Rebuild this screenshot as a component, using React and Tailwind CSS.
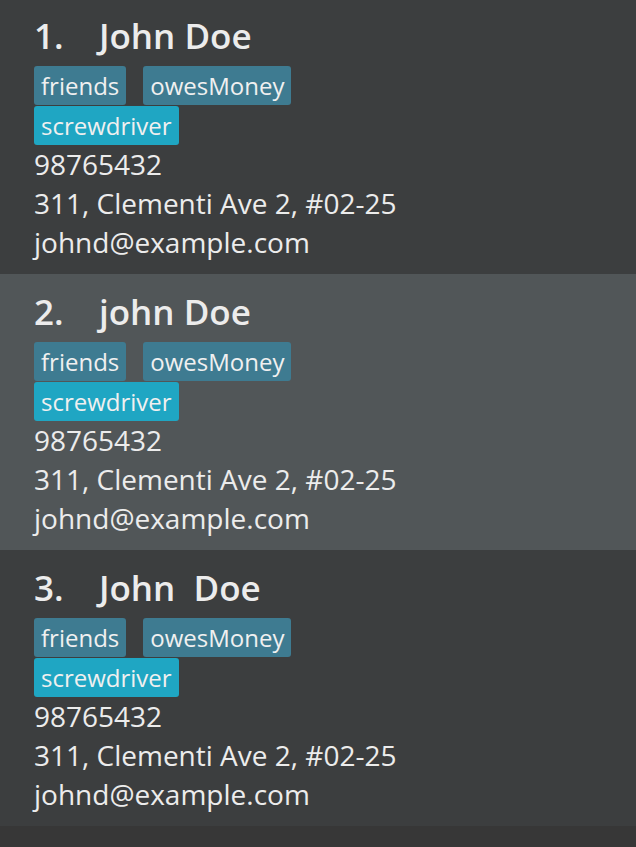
import React from "react";

const people = [
  { id: 1, name: "John Doe", selected: false },
  { id: 2, name: "john Doe", selected: true },
  { id: 3, name: "John  Doe", selected: false },
];

const Tag = ({ label, bright }) => (
  <span
    className={`inline-block rounded-[3px] px-[7px] h-[39px] leading-[39px] text-[24px] text-[#f0f0f0] ${
      bright ? "bg-[#1fa6c3]" : "bg-[#3e7b91]"
    }`}
  >
    {label}
  </span>
);

const PersonCard = ({ index, name, selected }) => (
  <div
    className={`h-[276px] pl-[34px] pt-[12px] ${
      selected ? "bg-[#515658]" : "bg-[#3c3e3f]"
    }`}
  >
    <div className="flex items-baseline text-[35px] font-semibold leading-[50px] text-[#ececec] translate-y-[1px]">
      <span className="w-[65px]">{index}.</span>
      <span className="whitespace-pre">{name}</span>
    </div>
    <div className="flex flex-wrap w-[300px] gap-x-[17px] gap-y-[1px] mt-[6px]">
      <Tag label="friends" />
      <Tag label="owesMoney" />
      <Tag label="screwdriver" bright />
    </div>
    <div className="text-[28px] leading-[39px] text-[#ececec]">
      <div>98765432</div>
      <div>311, Clementi Ave 2, #02-25</div>
      <div>johnd@example.com</div>
    </div>
  </div>
);

export default function App() {
  return (
    <div
      className="w-[636px] h-[847px] bg-[#373737] overflow-hidden"
      style={{ fontFamily: '"Open Sans", "Noto Sans", sans-serif' }}
    >
      <div className="-mt-[2px]">
        {people.map((p) => (
          <PersonCard key={p.id} index={p.id} name={p.name} selected={p.selected} />
        ))}
      </div>
    </div>
  );
}
